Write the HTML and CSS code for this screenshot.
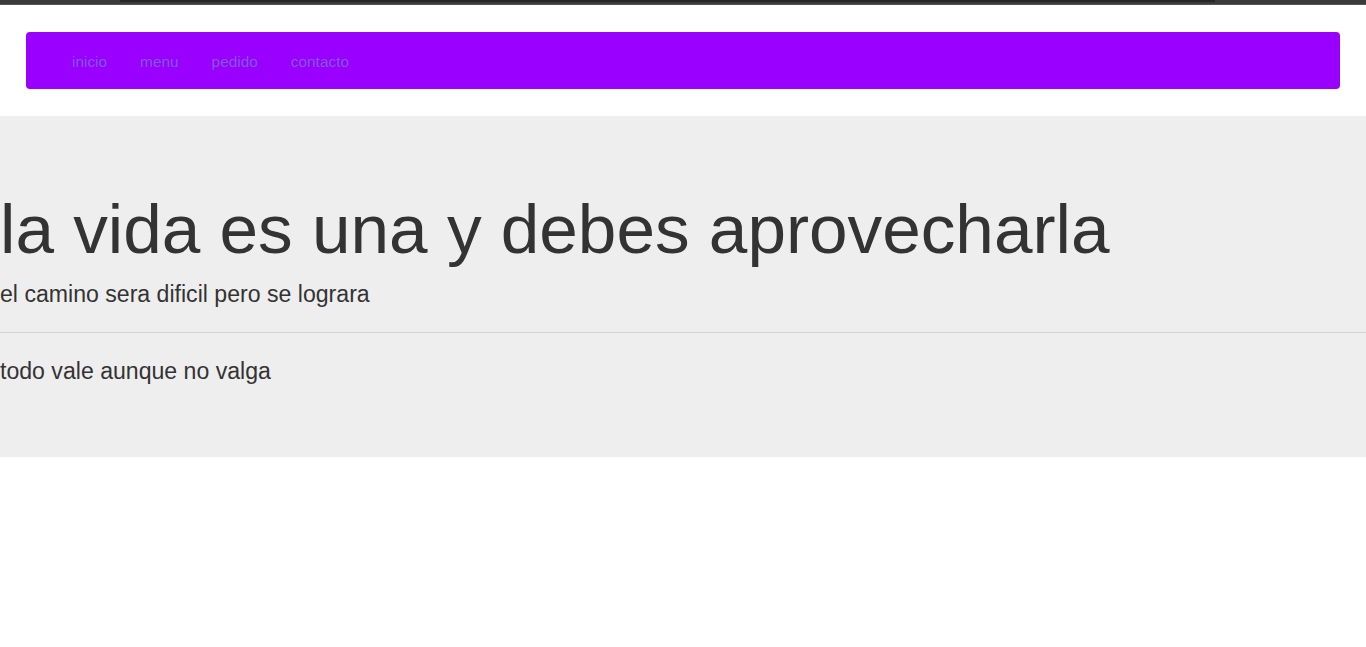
FILE: index.html
```html
<!DOCTYPE html>
<html lang="es">
<head>
<meta charset="utf-8">
<title>la vida es una</title>
<link rel="stylesheet" href="styles.css">
</head>
<body>
<div class="topbar"><div class="topbar-inner"></div></div>
<header class="nav-wrap">
  <nav class="navbar">
    <ul class="nav-links">
      <li><a href="#">inicio</a></li>
      <li><a href="#">menu</a></li>
      <li><a href="#">pedido</a></li>
      <li><a href="#">contacto</a></li>
    </ul>
  </nav>
</header>
<section class="jumbotron">
  <h1 class="title">la vida es una y debes aprovecharla</h1>
  <p class="lead">el camino sera dificil pero se lograra</p>
  <hr class="divider">
  <p class="lead lead-second">todo vale aunque no valga</p>
</section>
</body>
</html>
```

FILE: styles.css
```css
html, body {
  margin: 0;
  padding: 0;
  background: #ffffff;
  font-family: "Liberation Sans", Arial, Helvetica, sans-serif;
  color: #333333;
}

.topbar {
  height: 5px;
  background: #3b3b3b;
  border-bottom: 1px solid #555555;
  box-sizing: border-box;
  display: flex;
}

.topbar-inner {
  height: 2px;
  flex: 1;
  margin: 0 151px 0 120px;
  background: #262626;
}

.nav-wrap {
  padding: 27px 26px 27px 26px;
}

.navbar {
  height: 57px;
  box-sizing: border-box;
  padding-top: 2px;
  background: #9900ff;
  border-radius: 4px;
  display: flex;
  align-items: center;
  padding-left: 29.5px;
}

.nav-links {
  list-style: none;
  margin: 0;
  padding: 0;
  display: flex;
}

.nav-links a {
  display: block;
  padding: 0 16.5px;
  font-size: 15.4px;
  line-height: 22px;
  color: #8259dc;
  text-decoration: none;
}

.jumbotron {
  background: #eeeeee;
  padding: 75px 0 69px 0;
}

.title {
  margin: 0;
  font-size: 69.3px;
  line-height: 76px;
  font-weight: 400;
  color: #333333;
}

.lead {
  margin: 11px 0 0 0;
  font-size: 23.1px;
  line-height: 33px;
  color: #333333;
}

.divider {
  margin: 21px 0 0 0;
  border: 0;
  border-top: 1px solid #d4d4d4;
  height: 0;
}

.lead-second {
  margin-top: 22px;
}
```
